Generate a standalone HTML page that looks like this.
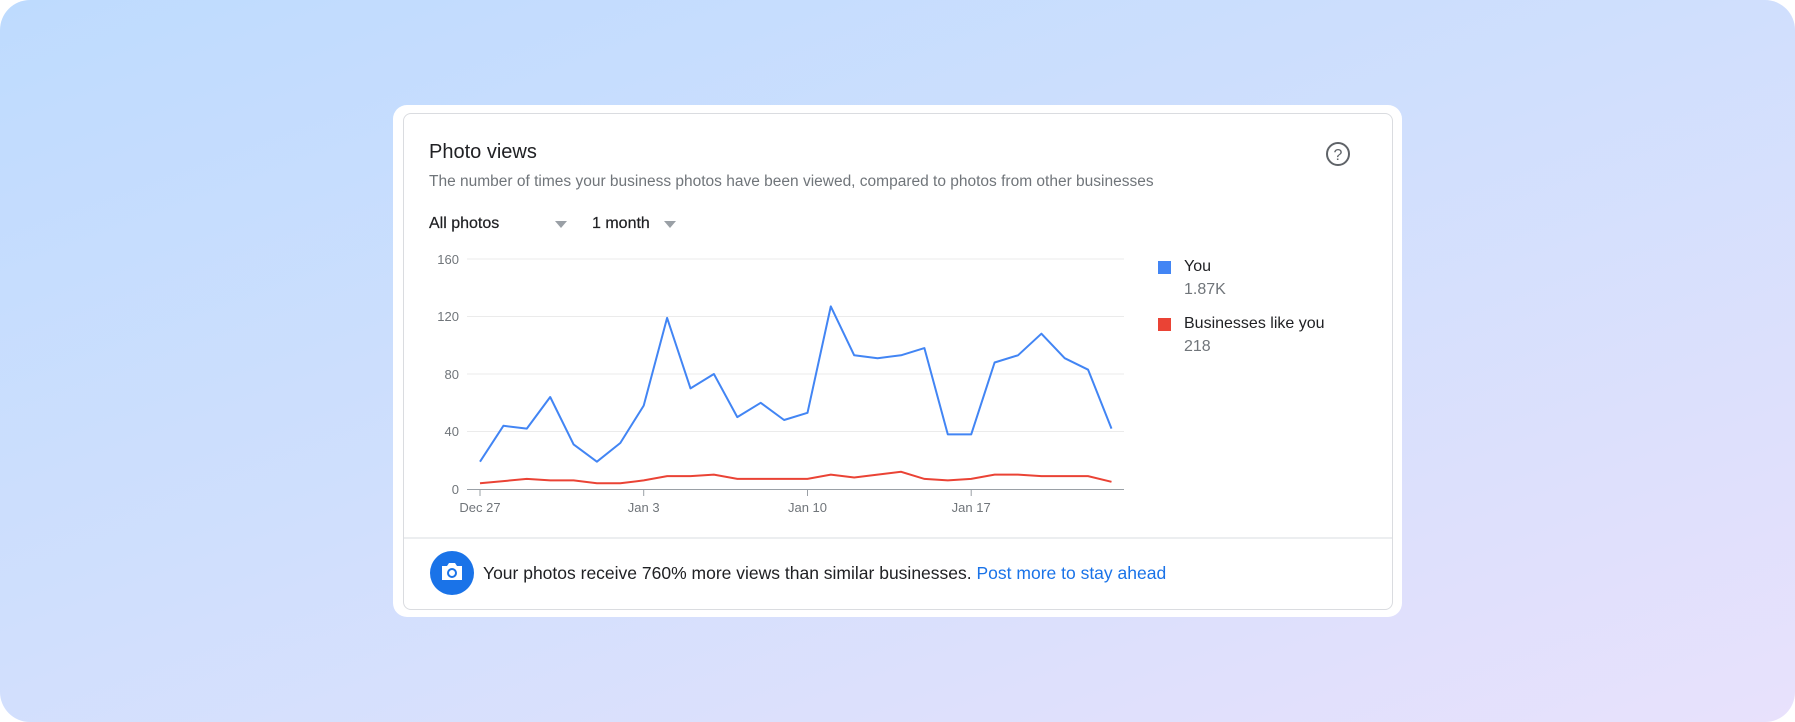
<!DOCTYPE html>
<html><head><meta charset="utf-8"><style>
*{margin:0;padding:0;box-sizing:border-box}
body{width:1795px;height:722px;overflow:hidden;background:#fff;font-family:"Liberation Sans",Arial,sans-serif}
#bg{position:absolute;left:0;top:0;width:1795px;height:722px;border-radius:30px;background:linear-gradient(160deg,#bedbfe 0%,#cfdffd 45%,#e8e1fc 100%)}
#outer{position:absolute;left:393px;top:105px;width:1009px;height:512px;background:#fff;border-radius:14px}
#inner{position:absolute;left:403px;top:113px;width:990px;height:497px;border:1px solid #dadce0;border-radius:8px}
.t{position:absolute;white-space:nowrap}
</style></head><body>
<div id="bg"></div>
<div id="outer"></div>
<div id="inner"></div>
<div class="t" style="left:429px;top:141px;font-size:20px;color:#202124">Photo views</div>
<div class="t" style="left:429px;top:173px;font-size:15.5px;color:#70757a">The number of times your business photos have been viewed, compared to photos from other businesses</div>
<div class="t" style="left:429px;top:215px;font-size:16px;color:#202124;font-weight:500;-webkit-text-stroke:0.2px #202124">All photos</div>
<div class="t" style="left:592px;top:215px;font-size:16px;color:#202124;-webkit-text-stroke:0.2px #202124">1 month</div>
<div class="t" style="left:1184px;top:258px;font-size:16px;color:#202124">You</div>
<div class="t" style="left:1184px;top:281px;font-size:16px;color:#70757a">1.87K</div>
<div class="t" style="left:1184px;top:315px;font-size:16px;color:#202124">Businesses like you</div>
<div class="t" style="left:1184px;top:338px;font-size:16px;color:#70757a">218</div>
<div class="t" style="left:483px;top:563px;font-size:17.5px;color:#202124">Your photos receive 760% more views than similar businesses. <span style="color:#1a73e8">Post more to stay ahead</span></div>
<svg style="position:absolute;left:0;top:0" width="1795" height="722">
<circle cx="1338" cy="154" r="11" fill="none" stroke="#5f6368" stroke-width="2"/>
<text x="1338" y="160" font-size="16" text-anchor="middle" fill="#5f6368" font-family="Liberation Sans">?</text>
<path d="M555 221h12l-6 7z" fill="#9aa0a6"/>
<path d="M664 221h12l-6 7z" fill="#9aa0a6"/>
<g stroke="#ebebeb" stroke-width="1">
<line x1="467" y1="259" x2="1124" y2="259"/><line x1="467" y1="316.5" x2="1124" y2="316.5"/><line x1="467" y1="374" x2="1124" y2="374"/><line x1="467" y1="431.5" x2="1124" y2="431.5"/>
</g>
<line x1="467" y1="489.5" x2="1124" y2="489.5" stroke="#9aa0a6" stroke-width="1"/>
<g stroke="#9aa0a6"><line x1="480" y1="490" x2="480" y2="496"/><line x1="643.7" y1="490" x2="643.7" y2="496"/><line x1="807.5" y1="490" x2="807.5" y2="496"/><line x1="971.2" y1="490" x2="971.2" y2="496"/></g>
<g font-size="13" fill="#70757a" font-family="Liberation Sans" text-anchor="end">
<text x="459" y="264">160</text><text x="459" y="321">120</text><text x="459" y="379">80</text><text x="459" y="436">40</text><text x="459" y="494">0</text>
</g>
<g font-size="13" fill="#70757a" font-family="Liberation Sans" text-anchor="middle">
<text x="480" y="512">Dec 27</text><text x="643.7" y="512">Jan 3</text><text x="807.5" y="512">Jan 10</text><text x="971.2" y="512">Jan 17</text>
</g>
<polyline fill="none" stroke="#ea4335" stroke-width="2" points="480,483.3 503.4,481.1 526.8,478.9 550.2,480.4 573.6,480.4 596.9,483.3 620.3,483.3 643.7,480.4 667.1,476.1 690.5,476.1 713.9,474.6 737.3,478.9 760.7,478.9 784.1,478.9 807.5,478.9 830.8,474.6 854.2,477.5 877.6,474.6 901,471.8 924.4,478.9 947.8,480.4 971.2,478.9 994.6,474.6 1018,474.6 1041.4,476.1 1064.7,476.1 1088.1,476.1 1111.5,481.8"/>
<polyline fill="none" stroke="#4285f4" stroke-width="2" stroke-linejoin="round" points="480,461.7 503.4,425.8 526.8,428.6 550.2,397 573.6,444.4 596.9,461.7 620.3,443 643.7,405.6 667.1,317.9 690.5,388.4 713.9,374 737.3,417.1 760.7,402.8 784.1,420 807.5,412.8 830.8,306.4 854.2,355.3 877.6,358.2 901,355.3 924.4,348.1 947.8,434.4 971.2,434.4 994.6,362.5 1018,355.3 1041.4,333.7 1064.7,358.2 1088.1,369.7 1111.5,428.6"/>
<rect x="1158" y="261" width="13" height="13" fill="#4285f4"/>
<rect x="1158" y="318" width="13" height="13" fill="#ea4335"/>
<line x1="404" y1="538" x2="1392" y2="538" stroke="#dadce0"/>
<circle cx="452" cy="573" r="22" fill="#1a73e8"/>
<path d="M442 566h5l2-3h6l2 3h5v14h-20z" fill="#fff"/>
<circle cx="452" cy="573" r="4" fill="none" stroke="#1a73e8" stroke-width="2"/>
</svg>
</body></html>
